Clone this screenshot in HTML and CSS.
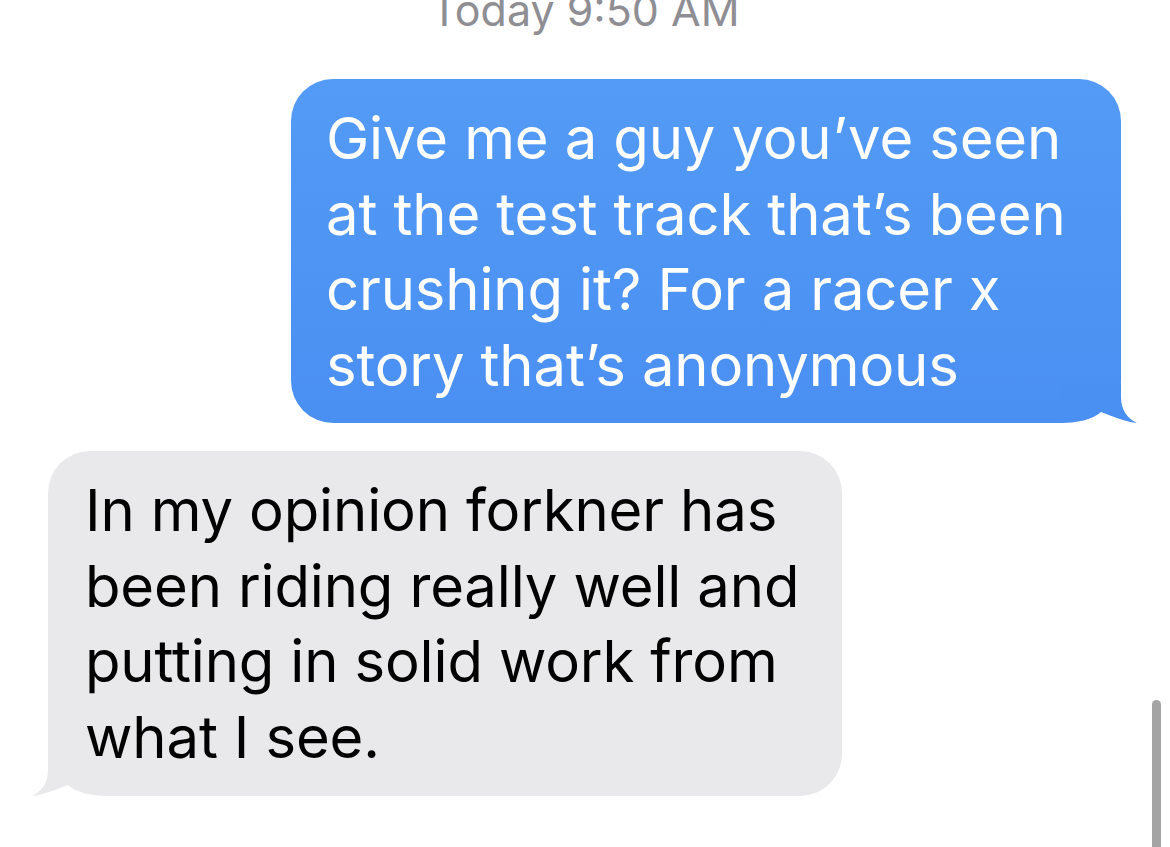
FILE: index.html
```html
<!DOCTYPE html>
<html lang="en">
<head>
<meta charset="utf-8">
<title>Messages</title>
<link rel="stylesheet" href="styles.css">
</head>
<body>
<div class="thread">
  <div class="timestamp">Today 9:50 AM</div>
  <div class="row row-out">
    <div class="bubble bubble-out">
      <p class="msg">Give me a guy you’ve seen<br>at the test track that’s been<br>crushing it? For a racer x<br>story that’s anonymous</p>
      <svg class="tail tail-out" viewBox="0 0 77 40" width="77" height="40" aria-hidden="true">
        <rect x="0" y="0" width="60" height="40" fill="#ffffff"/>
        <path d="M0,0 L60,0 L60,14 C60,27 66,35 76,40 C66,39 50,33 40,29 C32,36 18,40 0,40 Z" fill="#4a8ff2"/>
      </svg>
    </div>
  </div>
  <div class="row row-in">
    <div class="bubble bubble-in">
      <p class="msg">In my opinion forkner has<br>been riding really well and<br>putting in solid work from<br>what I see.</p>
      <svg class="tail tail-in" viewBox="0 0 77 40" width="77" height="40" aria-hidden="true">
        <rect x="0" y="0" width="60" height="40" fill="#ffffff"/>
        <path d="M0,0 L60,0 L60,14 C60,27 66,35 76,40 C66,39 50,33 40,29 C32,36 18,40 0,40 Z" fill="#e9e9eb"/>
      </svg>
    </div>
  </div>
</div>
<div class="scrollbar"></div>
</body>
</html>
```
FILE: styles.css
```css
html, body {
  margin: 0;
  padding: 0;
  background: #ffffff;
  overflow: hidden;
}

body {
  width: 1170px;
  height: 847px;
  font-family: "Inter", "Noto Sans", "Liberation Sans", sans-serif;
  position: relative;
}

.thread {
  display: flex;
  flex-direction: column;
}

.timestamp {
  font-size: 43px;
  line-height: 40px;
  color: #8e8e93;
  text-align: center;
  margin-top: -10px;
  margin-bottom: 49px;
}

.row {
  display: flex;
}

.row-out {
  justify-content: flex-end;
  padding-right: 49px;
  margin-bottom: 28px;
}

.row-in {
  justify-content: flex-start;
  padding-left: 48px;
}

.bubble {
  position: relative;
  box-sizing: border-box;
  border-radius: 42px;
  padding: 22px 20px 20px 36px;
}

.bubble-out {
  width: 830px;
  height: 344px;
  background: linear-gradient(to bottom, #539bf6, #4a8ff2);
  color: #ffffff;
  padding-left: 35px;
}

.bubble-in {
  width: 794px;
  height: 345px;
  background: #e9e9eb;
  color: #000000;
  padding-left: 37px;
}

.msg {
  margin: 0;
  font-size: 58px;
  line-height: 75.5px;
  letter-spacing: -0.15px;
  white-space: nowrap;
}

.tail {
  position: absolute;
  bottom: 0;
  display: block;
}

.tail-out {
  right: -17px;
}

.tail-in {
  left: -17px;
  transform: scaleX(-1);
}

.scrollbar {
  position: absolute;
  left: 1152px;
  top: 700px;
  width: 9px;
  height: 160px;
  background: #a4a4a4;
  border-radius: 5px 5px 0 0;
}
```
